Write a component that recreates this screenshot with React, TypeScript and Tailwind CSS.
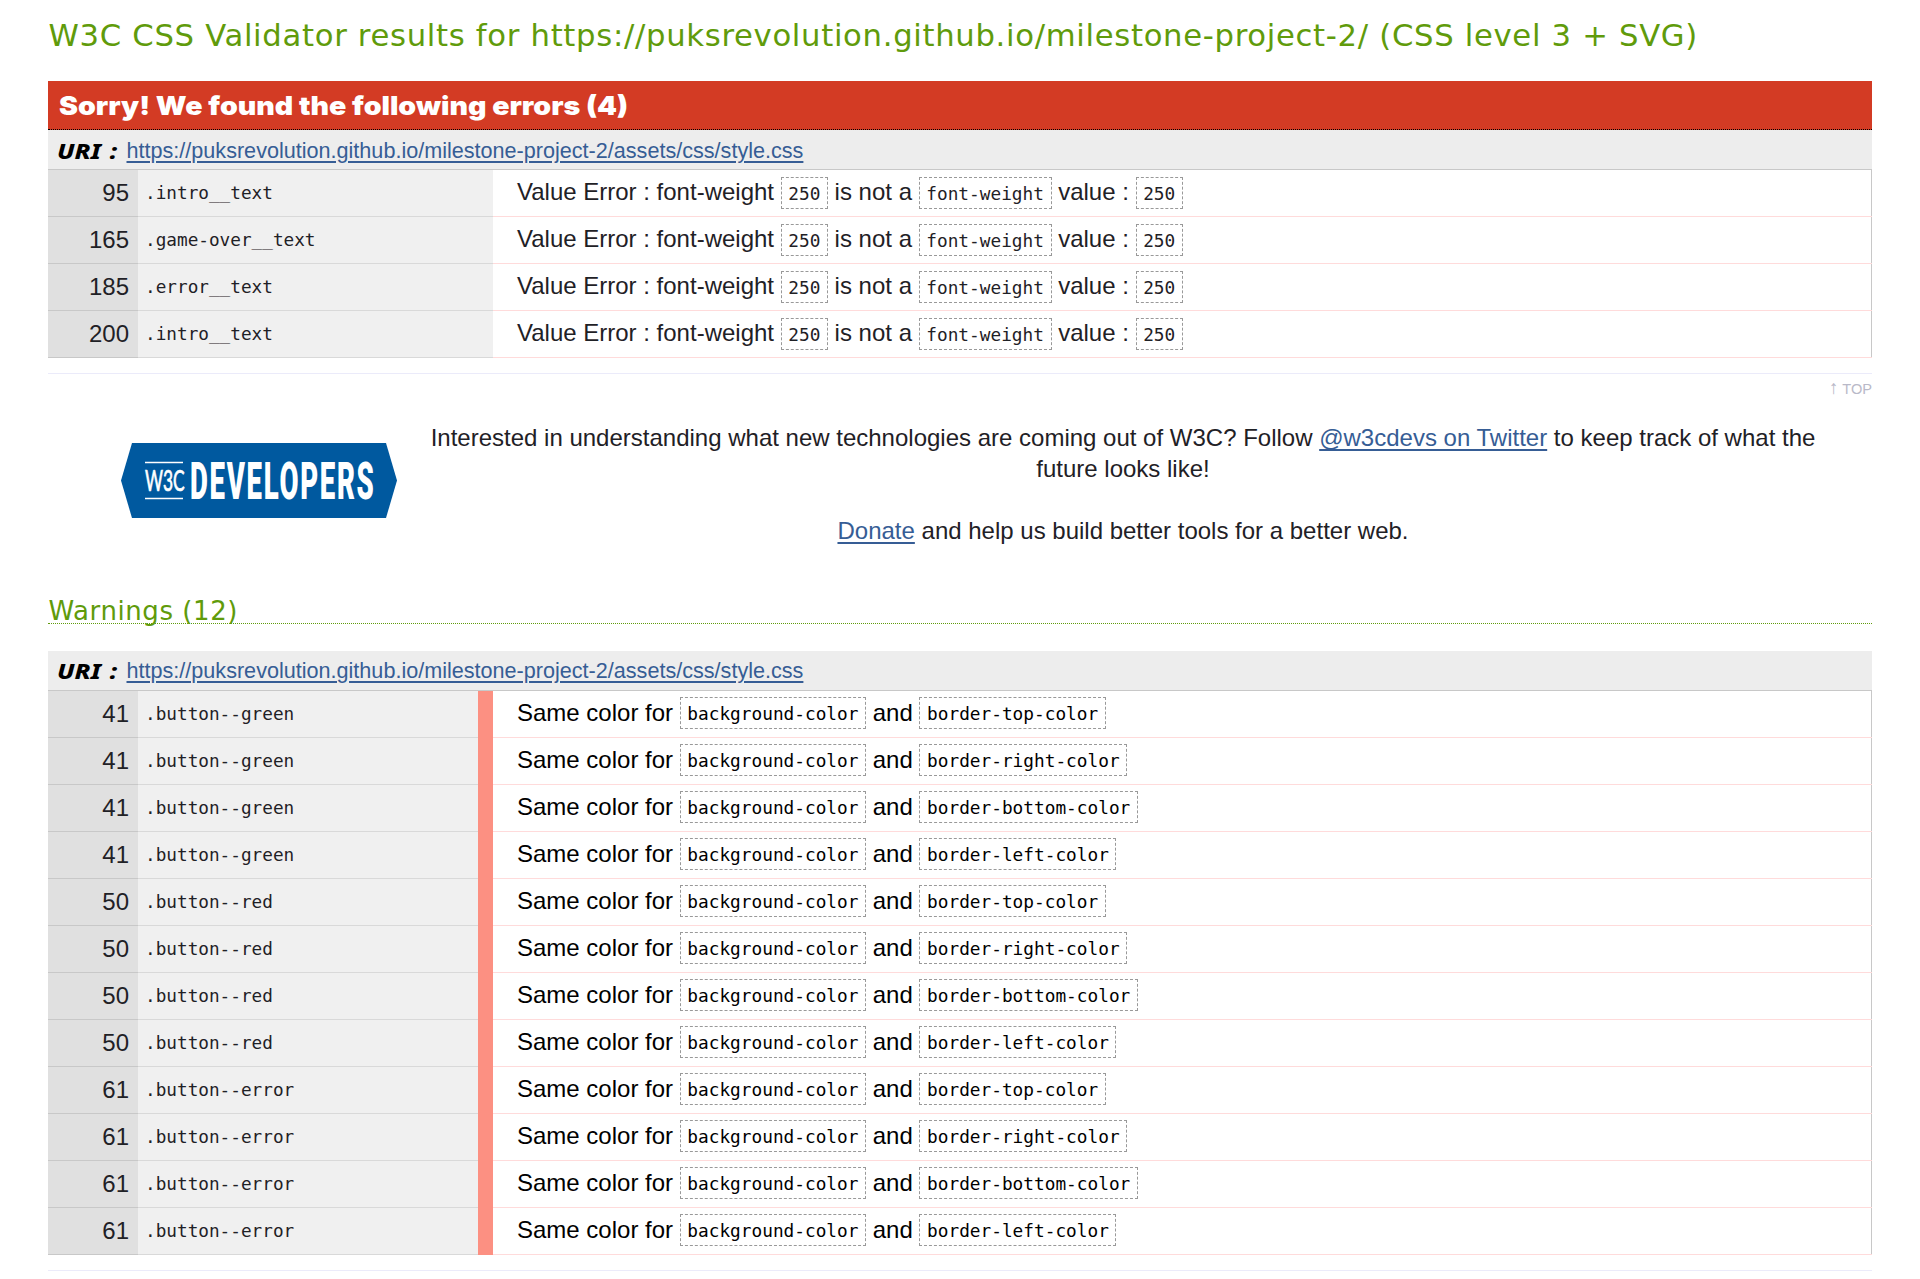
import React from "react";

const STYLESHEET = "https://puksrevolution.github.io/milestone-project-2/assets/css/style.css";

const errors = [
  { line: 95, selector: ".intro__text" },
  { line: 165, selector: ".game-over__text" },
  { line: 185, selector: ".error__text" },
  { line: 200, selector: ".intro__text" },
];

const sides = ["top", "right", "bottom", "left"];

const warnings = [
  { line: 41, selector: ".button--green" },
  { line: 50, selector: ".button--red" },
  { line: 61, selector: ".button--error" },
].flatMap((rule) => sides.map((side) => ({ ...rule, property: `border-${side}-color` })));

function Code({ children, raised = false }: { children: React.ReactNode; raised?: boolean }) {
  return (
    <code
      className={
        "inline-block h-8 border border-dashed border-[#999] px-[6.6px] font-['DejaVu_Sans_Mono',monospace] text-[17.78px] leading-[31px] " +
        (raised ? "align-[1px]" : "align-[0px]")
      }
    >
      {children}
    </code>
  );
}

function Uri({ raised = false }: { raised?: boolean }) {
  return (
    <div className="flex h-[39px] items-center bg-[#ededed] pl-[9px]">
      <span
        className={
          "w-[69.5px] shrink-0 origin-left scale-x-[1.15] whitespace-nowrap font-['Noto_Sans',sans-serif] text-[22px] leading-[36px] font-extrabold italic text-black [word-spacing:2px] " +
          (raised ? "pb-[2px]" : "")
        }
      >
        URI :
      </span>
      <a
        href="#"
        className={
          "text-[21.6px] leading-[39px] text-[#365d95] underline decoration-2 underline-offset-[3px] " +
          (raised ? "" : "pt-px")
        }
      >
        {STYLESHEET}
      </a>
    </div>
  );
}

function Row({
  line,
  selector,
  warning = false,
  children,
}: {
  line: number;
  selector: string;
  warning?: boolean;
  children: React.ReactNode;
}) {
  return (
    <div className="flex h-[47px]">
      <div className="w-[90px] border-b border-[#c8c8c8] bg-[#e0e0e0] pr-[9px] text-right leading-[46px]">{line}</div>
      <div className="flex w-[355px] bg-[#f0f0f0]">
        <div className="flex-1 border-b border-[#d9d9d9] pl-[7px] font-['DejaVu_Sans_Mono',monospace] text-[17.72px] leading-[46px]">
          {selector}
        </div>
        {warning && <div className="w-[15px] bg-[#fc9082]" />}
      </div>
      <div
        className={
          "flex-1 border-b border-[#ffdbdb] pl-6 leading-[44px] whitespace-nowrap " + (warning ? "text-black" : "")
        }
      >
        {children}
      </div>
      <div className="-ml-px h-[46px] w-px bg-[#c8c8c8]" />
    </div>
  );
}

function DevelopersLogo() {
  return (
    <svg width="276" height="75" viewBox="0 0 276 75" className="shrink-0">
      <path d="M11 0H265L276 37.5L265 75H11L0 37.5Z" fill="#00599f" />
      <path d="M24 19.5H62M24 55.5H62" stroke="#fff" strokeWidth="1.4" />
      <text
        transform="translate(24 48) scale(0.6 1)"
        fill="#fff"
        stroke="#fff"
        strokeWidth="0.7"
        fontFamily="Lato, sans-serif"
        fontSize="29"
      >
        W3C
      </text>
      <text
        transform="translate(69 56) scale(0.53 1)"
        fill="#fff"
        fontFamily="Roboto, sans-serif"
        fontWeight="900"
        fontSize="52"
        letterSpacing="3.2"
      >
        DEVELOPERS
      </text>
    </svg>
  );
}

export default function App() {
  return (
    <main className="h-[1279px] w-[1920px] overflow-hidden bg-white px-12 font-['Liberation_Sans',Arial,sans-serif] text-[24px] text-[#1f2126]">
      <h1 className="h-[81px] pt-[15px] pl-[0.5px] font-['DejaVu_Sans',sans-serif] text-[30.7px] leading-[42px] tracking-[0.68px] whitespace-nowrap text-[#609b0b]">
        W3C CSS Validator results for https://puksrevolution.github.io/milestone-project-2/ (CSS level 3 + SVG)
      </h1>

      <section>
        <h2 className="h-[49px] border-b border-dotted border-black bg-[#d33b24] pl-[11px] font-['Inter',sans-serif] text-[26px] leading-[49px] font-black whitespace-nowrap text-white">
          <span className="inline-block origin-left scale-x-[1.098]">Sorry! We found the following errors (4)</span>
        </h2>
        <Uri />
        <div className="border-t border-[#c8c8c8]">
          {errors.map((e) => (
            <Row key={e.line} line={e.line} selector={e.selector}>
              Value Error : font-weight <Code>250</Code> is not a <Code>font-weight</Code> value : <Code>250</Code>
            </Row>
          ))}
        </div>
      </section>

      <div className="mt-[15px] h-[49px] border-t border-[#ebebfa] pt-[4px] text-right text-[14.6px] leading-[22px] text-[#b9b9c8]">
        <span className="text-[19px] leading-none">↑</span> TOP
      </div>

      <section className="flex h-[162px] pt-[21px] pl-[73px]">
        <DevelopersLogo />
        <div className="-mt-[21px] flex-1 pr-[27px] pl-[4px] text-center leading-[31px]">
          <p>
            Interested in understanding what new technologies are coming out of W3C? Follow{" "}
            <a href="#" className="text-[#365d95] underline decoration-2 underline-offset-[3px]">
              @w3cdevs on Twitter
            </a>{" "}
            to keep track of what the
            <br />
            future looks like!
          </p>
          <p className="mt-[31px]">
            <a href="#" className="text-[#365d95] underline decoration-2 underline-offset-[3px]">
              Donate
            </a>{" "}
            and help us build better tools for a better web.
          </p>
        </div>
      </section>

      <section>
        <h2 className="mb-[27px] h-[40px] border-b border-dotted border-[#609b0b] pt-[10px] pl-[0.5px] font-['DejaVu_Sans',sans-serif] text-[26px] leading-[34px] tracking-[0.57px] text-[#609b0b]">
          Warnings (12)
        </h2>
        <Uri raised />
        <div className="border-t border-[#c8c8c8]">
          {warnings.map((w) => (
            <Row key={w.line + w.property} line={w.line} selector={w.selector} warning>
              Same color for <Code raised>background-color</Code> and <Code raised>{w.property}</Code>
            </Row>
          ))}
        </div>
      </section>

      <hr className="mt-[15px] border-t border-[#ebebfa]" />
    </main>
  );
}
